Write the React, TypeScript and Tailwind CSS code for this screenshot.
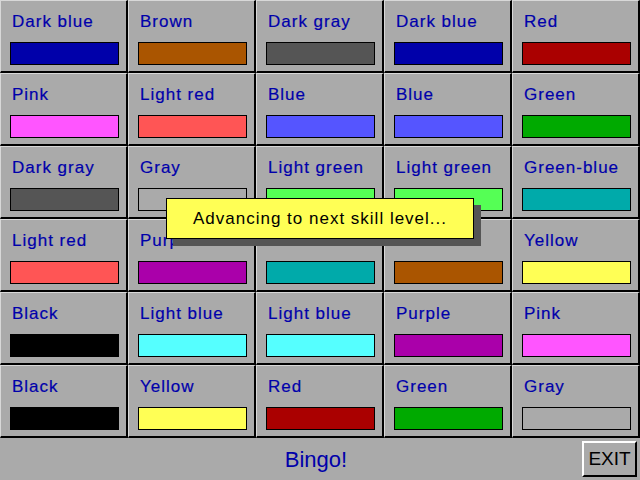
const cells: [string, string][] = [
  ["Dark blue", "#0000aa"],
  ["Brown", "#aa5500"],
  ["Dark gray", "#555555"],
  ["Dark blue", "#0000aa"],
  ["Red", "#aa0000"],
  ["Pink", "#ff55ff"],
  ["Light red", "#ff5555"],
  ["Blue", "#5555ff"],
  ["Blue", "#5555ff"],
  ["Green", "#00aa00"],
  ["Dark gray", "#555555"],
  ["Gray", "#aaaaaa"],
  ["Light green", "#55ff55"],
  ["Light green", "#55ff55"],
  ["Green-blue", "#00aaaa"],
  ["Light red", "#ff5555"],
  ["Purple", "#aa00aa"],
  ["Green-blue", "#00aaaa"],
  ["Brown", "#aa5500"],
  ["Yellow", "#ffff55"],
  ["Black", "#000000"],
  ["Light blue", "#55ffff"],
  ["Light blue", "#55ffff"],
  ["Purple", "#aa00aa"],
  ["Pink", "#ff55ff"],
  ["Black", "#000000"],
  ["Yellow", "#ffff55"],
  ["Red", "#aa0000"],
  ["Green", "#00aa00"],
  ["Gray", "#aaaaaa"],
];

function Cell({ label, color }: { label: string; color: string }) {
  return (
    <div className="h-[73px] bg-[#aaaaaa] border-t border-l border-[#d8d8d8] border-r-2 border-b-2 border-r-black border-b-black pl-[9px] pr-[7px] pt-[11px]">
      <div className="pl-[2px] text-[17px] leading-[20px] tracking-[1px] text-[#0000aa] whitespace-nowrap [-webkit-text-stroke:0.2px_#0000aa]">
        {label}
      </div>
      <div className="mt-[10px] h-[23px] border border-black" style={{ backgroundColor: color }} />
    </div>
  );
}

export default function App() {
  return (
    <div className="w-[640px] h-[480px] bg-[#aaaaaa] overflow-hidden font-['Liberation_Sans',Arial,sans-serif] relative">
      {/* Grid of colour cards */}
      <div className="grid grid-cols-5">
        {cells.map(([label, color], i) => (
          <Cell key={i} label={label} color={color} />
        ))}
      </div>

      {/* Bottom bar */}
      <div className="h-[42px] grid grid-cols-[58px_1fr_58px] items-center">
        <div />
        <div className="text-center pr-[8px] text-[22px] text-[#0000aa]">Bingo!</div>
        <button className="w-[55px] h-[36px] bg-[#aaaaaa] border-2 border-t-white border-l-white border-r-black border-b-black text-[19px] text-black">
          EXIT
        </button>
      </div>

      {/* Popup message */}
      <div className="absolute left-[166px] top-[198px]">
        <div className="relative">
          <div className="absolute left-[7px] top-[7px] w-[308px] h-[41px] bg-[#555555]" />
          <div className="relative w-[308px] h-[41px] bg-[#ffff55] border border-black flex items-center justify-center text-[17px] tracking-[1px] text-black">
            Advancing to next skill level...
          </div>
        </div>
      </div>
    </div>
  );
}
